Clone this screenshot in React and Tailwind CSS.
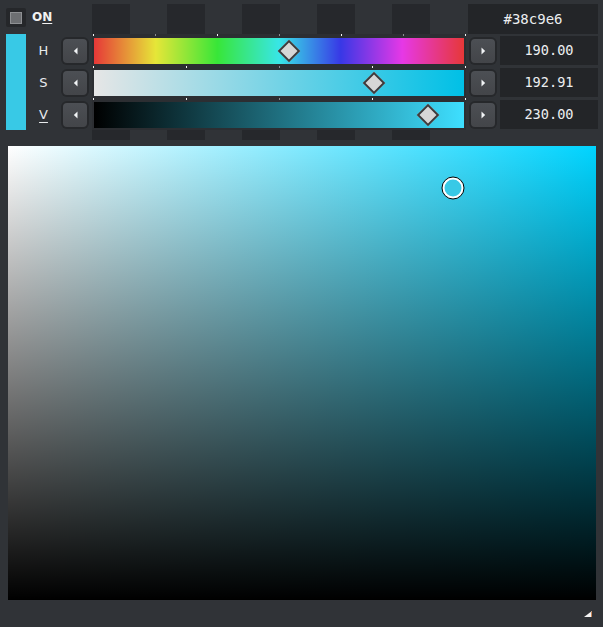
import React from 'react';

const HUE = 190;
const SAT = 192.91;
const VAL = 230;

// column offsets of the dark strip blocks behind the sliders
const BLOCKS = [0, 1, 2, 3, 4];

function Blocks({ h }) {
  return (
    <div className={`flex gap-[37px] w-[374px] ${h}`}>
      {BLOCKS.map((i) => (
        <div key={i} className="w-[38px] h-full bg-[#26282c]" />
      ))}
    </div>
  );
}

function Ticks({ marks, className }) {
  return (
    <div className={`flex justify-between pl-[1px] ${className}`}>
      {marks.map((c, i) => (
        <div key={i} className={`w-[1px] h-[2px] ${c ? 'bg-[#f4f4f4]' : 'bg-[#8b8d90]'}`} />
      ))}
    </div>
  );
}

function StepButton({ dir }) {
  return (
    <div className="w-[28px] h-[28px] rounded-[6px] bg-[#26282b] p-[2px]">
      <div className="w-full h-full rounded-[4px] bg-gradient-to-b from-[#4c4f54] to-[#434549] flex items-center justify-center">
        <svg width="5" height="8" viewBox="0 0 5 8">
          <path d={dir === 'left' ? 'M4.5 0.5 L0.8 4 L4.5 7.5Z' : 'M0.5 0.5 L4.2 4 L0.5 7.5Z'} fill="#f2f4f6" />
        </svg>
      </div>
    </div>
  );
}

function Bar({ gradient, pos }) {
  return (
    <div className={`relative mx-[2px] h-[26px] ${gradient}`}>
      <div
        className="absolute top-1/2 w-[16px] h-[16px] -translate-x-1/2 -translate-y-1/2 rotate-45 bg-[#d6d6d6] border-2 border-[#3b3b3d]"
        style={{ left: `${pos * 100}%` }}
      />
    </div>
  );
}

function Value({ children }) {
  return (
    <div className="h-[29px] bg-[#232528] flex items-center justify-center text-[13.6px] text-[#eceef0] font-['DejaVu_Sans_Mono',monospace]">
      {children}
    </div>
  );
}

export default function App() {
  const hueMarks = [1, 0, 1, 0, 1, 0, 1];
  const quarterMarks = [1, 1, 0, 1, 1];

  return (
    <div className="w-[603px] h-[627px] bg-[#303337] font-['DejaVu_Sans',sans-serif] overflow-hidden">
      {/* top row: enable toggle, strip blocks, hex */}
      <div className="flex h-[30px] mt-[4px]">
        <div className="w-[92px] flex items-start">
          <div className="ml-[6px] mt-[4px] w-[20px] h-[19px] bg-[#25272a] rounded-[2px] flex items-center justify-center">
            <div className="w-[12px] h-[12px] border border-[#8e9093] bg-[#6d6f72]" />
          </div>
          <div className="ml-[6px] mt-[7px] text-[12px] font-bold text-[#f2f2f2] leading-none">
            O<span className="underline underline-offset-2">N</span>
          </div>
        </div>
        <Blocks h="h-full" />
        <div className="ml-[2px] w-[130px] bg-[#232528] flex items-center justify-center text-[14px] text-[#eceef0] font-['DejaVu_Sans_Mono',monospace]">
          #38c9e6
        </div>
      </div>

      {/* HSV rows */}
      <div className="flex h-[96px]">
        <div className="ml-[6px] w-[20px] h-full bg-[#38c9e6]" />
        <div className="w-[35px] flex flex-col text-[13px] text-[#e8eaec]">
          <div className="h-[32px] flex items-center justify-center pt-[2px]">H</div>
          <div className="h-[32px] flex items-center justify-center pt-[2px]">S</div>
          <div className="h-[32px] flex items-center justify-center pt-[2px]">
            <span className="underline underline-offset-[3px]">V</span>
          </div>
        </div>
        <div className="w-[28px] flex flex-col gap-[4px] pt-[3px]">
          <StepButton dir="left" />
          <StepButton dir="left" />
          <StepButton dir="left" />
        </div>
        <div className="ml-[3px] w-[374px] bg-[#2c2e32] flex flex-col">
          <Ticks marks={hueMarks} className="h-[4px] items-start" />
          <Bar
            gradient="bg-[linear-gradient(to_right,#e63838,#e6e638,#38e638,#38e6e6,#3838e6,#e638e6,#e63838)]"
            pos={HUE / 360}
          />
          <Ticks marks={quarterMarks} className="h-[6px] items-center" />
          <Bar gradient="bg-[linear-gradient(to_right,#e6e6e6,#00c0e6)]" pos={SAT / 255} />
          <Ticks marks={quarterMarks} className="h-[6px] items-center" />
          <Bar gradient="bg-[linear-gradient(to_right,#000000,#3edfff)]" pos={VAL / 255} />
        </div>
        <div className="ml-[3px] w-[28px] flex flex-col gap-[4px] pt-[3px]">
          <StepButton dir="right" />
          <StepButton dir="right" />
          <StepButton dir="right" />
        </div>
        <div className="ml-[3px] w-[98px] flex flex-col gap-[3px] pt-[2px]">
          <Value>190.00</Value>
          <Value>192.91</Value>
          <Value>230.00</Value>
        </div>
      </div>

      {/* bottom strip */}
      <div className="flex h-[10px]">
        <div className="w-[92px]" />
        <Blocks h="h-full" />
      </div>

      {/* saturation / value field */}
      <div className="relative ml-[8px] mt-[6px] w-[588px] h-[454px] bg-[linear-gradient(to_bottom,rgba(0,0,0,0),#000),linear-gradient(to_right,#fff,#00d4ff)]">
        <div
          className="absolute w-[23px] h-[23px] -translate-x-1/2 -translate-y-1/2 rounded-full border-[1.5px] border-black bg-white p-[2px]"
          style={{ left: `${(SAT / 255) * 100}%`, top: `${(1 - VAL / 255) * 100 - 0.6}%` }}
        >
          <div className="w-full h-full rounded-full bg-[#38c9e6]" />
        </div>
      </div>

      {/* resize grip */}
      <div className="flex justify-end pr-[11px] pt-[11px]">
        <svg width="8" height="6" viewBox="0 0 8 6">
          <path d="M8 0 L8 6 L0 6Z" fill="#f4f4f4" />
          <path d="M7 1 L8 0 L8 6 L7 6Z" fill="#c8875a" />
        </svg>
      </div>
    </div>
  );
}
